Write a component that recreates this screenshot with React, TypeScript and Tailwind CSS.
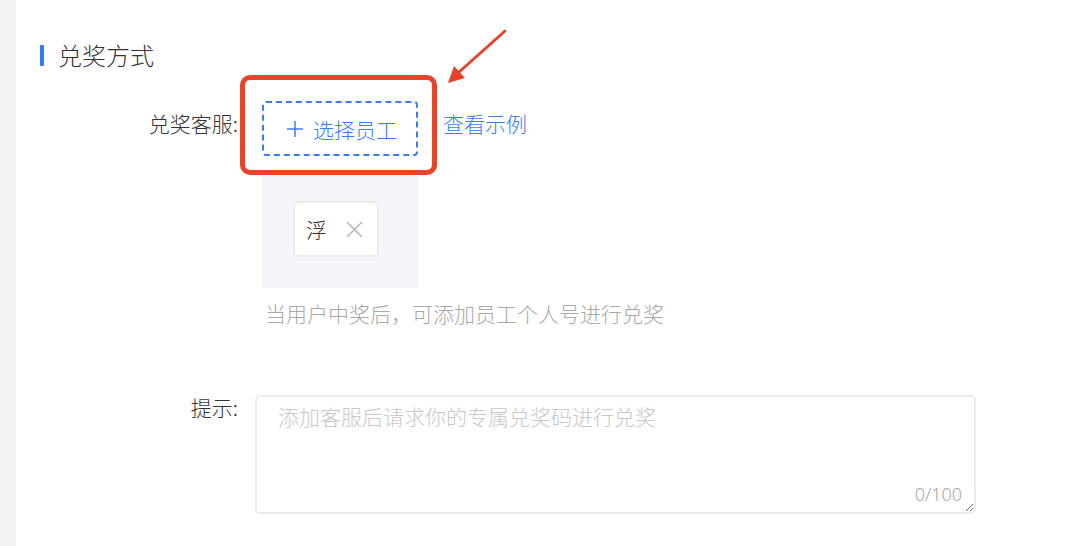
import React from "react";

export default function App() {
  return (
    <div className="flex w-[1070px] h-[546px] overflow-hidden bg-white font-['Noto_Sans_CJK_SC','Noto_Sans',sans-serif] font-light text-[#333]">
      <div className="w-[16px] shrink-0 bg-[#f3f3f3]" />
      <div className="flex-1 pl-[24px] pt-[41px]">
        {/* Title */}
        <div className="flex items-center h-[28px]">
          <div className="w-[4px] h-[21px] bg-[#3478f6] rounded-[1px]" />
          <div className="ml-[14px] text-[24px] leading-[28px] text-[#333]">兑奖方式</div>
        </div>

        {/* Row 1 */}
        <div className="flex mt-[32px]">
          <div className="w-[198px] shrink-0 text-right text-[21px] leading-[30px] pt-[7px]">兑奖客服:</div>
          <div className="ml-[24px] flex flex-col">
            <div className="flex items-start">
              <div className="relative">
                <div className="w-[156px] h-[55px] border-2 border-dashed border-[#3a7cf6] rounded-[4px] flex items-center justify-center pl-[4px] text-[#3a7cf6] text-[21px] leading-[30px]">
                  <svg className="mr-[10px]" width="16" height="16" viewBox="0 0 16 16">
                    <path d="M8 0 V16 M0 8 H16" stroke="#3a7cf6" strokeWidth="1.5" />
                  </svg>
                  <span>选择员工</span>
                </div>
                <div className="absolute left-[-22px] top-[-26px] w-[197px] h-[100px] border-[5px] border-[#e9432b] rounded-[10px] pointer-events-none" />
                <svg className="absolute left-[182px] top-[-73px]" width="66" height="62" viewBox="0 0 66 62">
                  <line x1="61" y1="3" x2="14" y2="45" stroke="#e9432b" strokeWidth="3" strokeLinecap="round" />
                  <polygon points="4,55 10,38 21,50" fill="#e9432b" />
                </svg>
              </div>
              <div className="ml-[25px] text-[21px] leading-[30px] pt-[7px] text-[#3a7cf6]">查看示例</div>
            </div>
            <div className="mt-[14px] w-[156px] h-[118px] bg-[#f4f5f9] pt-[31px] pl-[31px]">
              <div className="w-[86px] h-[56px] bg-white border-2 border-[#ececec] rounded-[5px] flex items-center pl-[11px]">
                <span className="text-[21px] leading-[30px] text-[#333]">浮</span>
                <svg className="ml-[19px]" width="17" height="17" viewBox="0 0 17 17">
                  <path d="M1 1 L16 16 M16 1 L1 16" stroke="#b5b5b5" strokeWidth="1.5" />
                </svg>
              </div>
            </div>
            <div className="mt-[10px] text-[21px] leading-[30px] text-[#a8a8a8] ml-[3px]">当用户中奖后，可添加员工个人号进行兑奖</div>
          </div>
        </div>

        {/* Row 2 */}
        <div className="flex mt-[67px]">
          <div className="w-[198px] shrink-0 text-right text-[21px] leading-[24px]">提示:</div>
          <div className="ml-[17px] relative">
            <textarea
              className="block w-[721px] h-[119px] border-2 border-[#ebebeb] rounded-[5px] px-[21px] pt-[4px] text-[21px] leading-[30px] font-light text-[#333] placeholder:text-[#c8c8c8] outline-none"
              placeholder="添加客服后请求你的专属兑奖码进行兑奖"
            />
            <div className="absolute right-[14px] bottom-[8px] text-[18px] leading-[24px] text-[#a8a8a8] font-['Noto_Sans',sans-serif]">0/100</div>
          </div>
        </div>
      </div>
    </div>
  );
}
